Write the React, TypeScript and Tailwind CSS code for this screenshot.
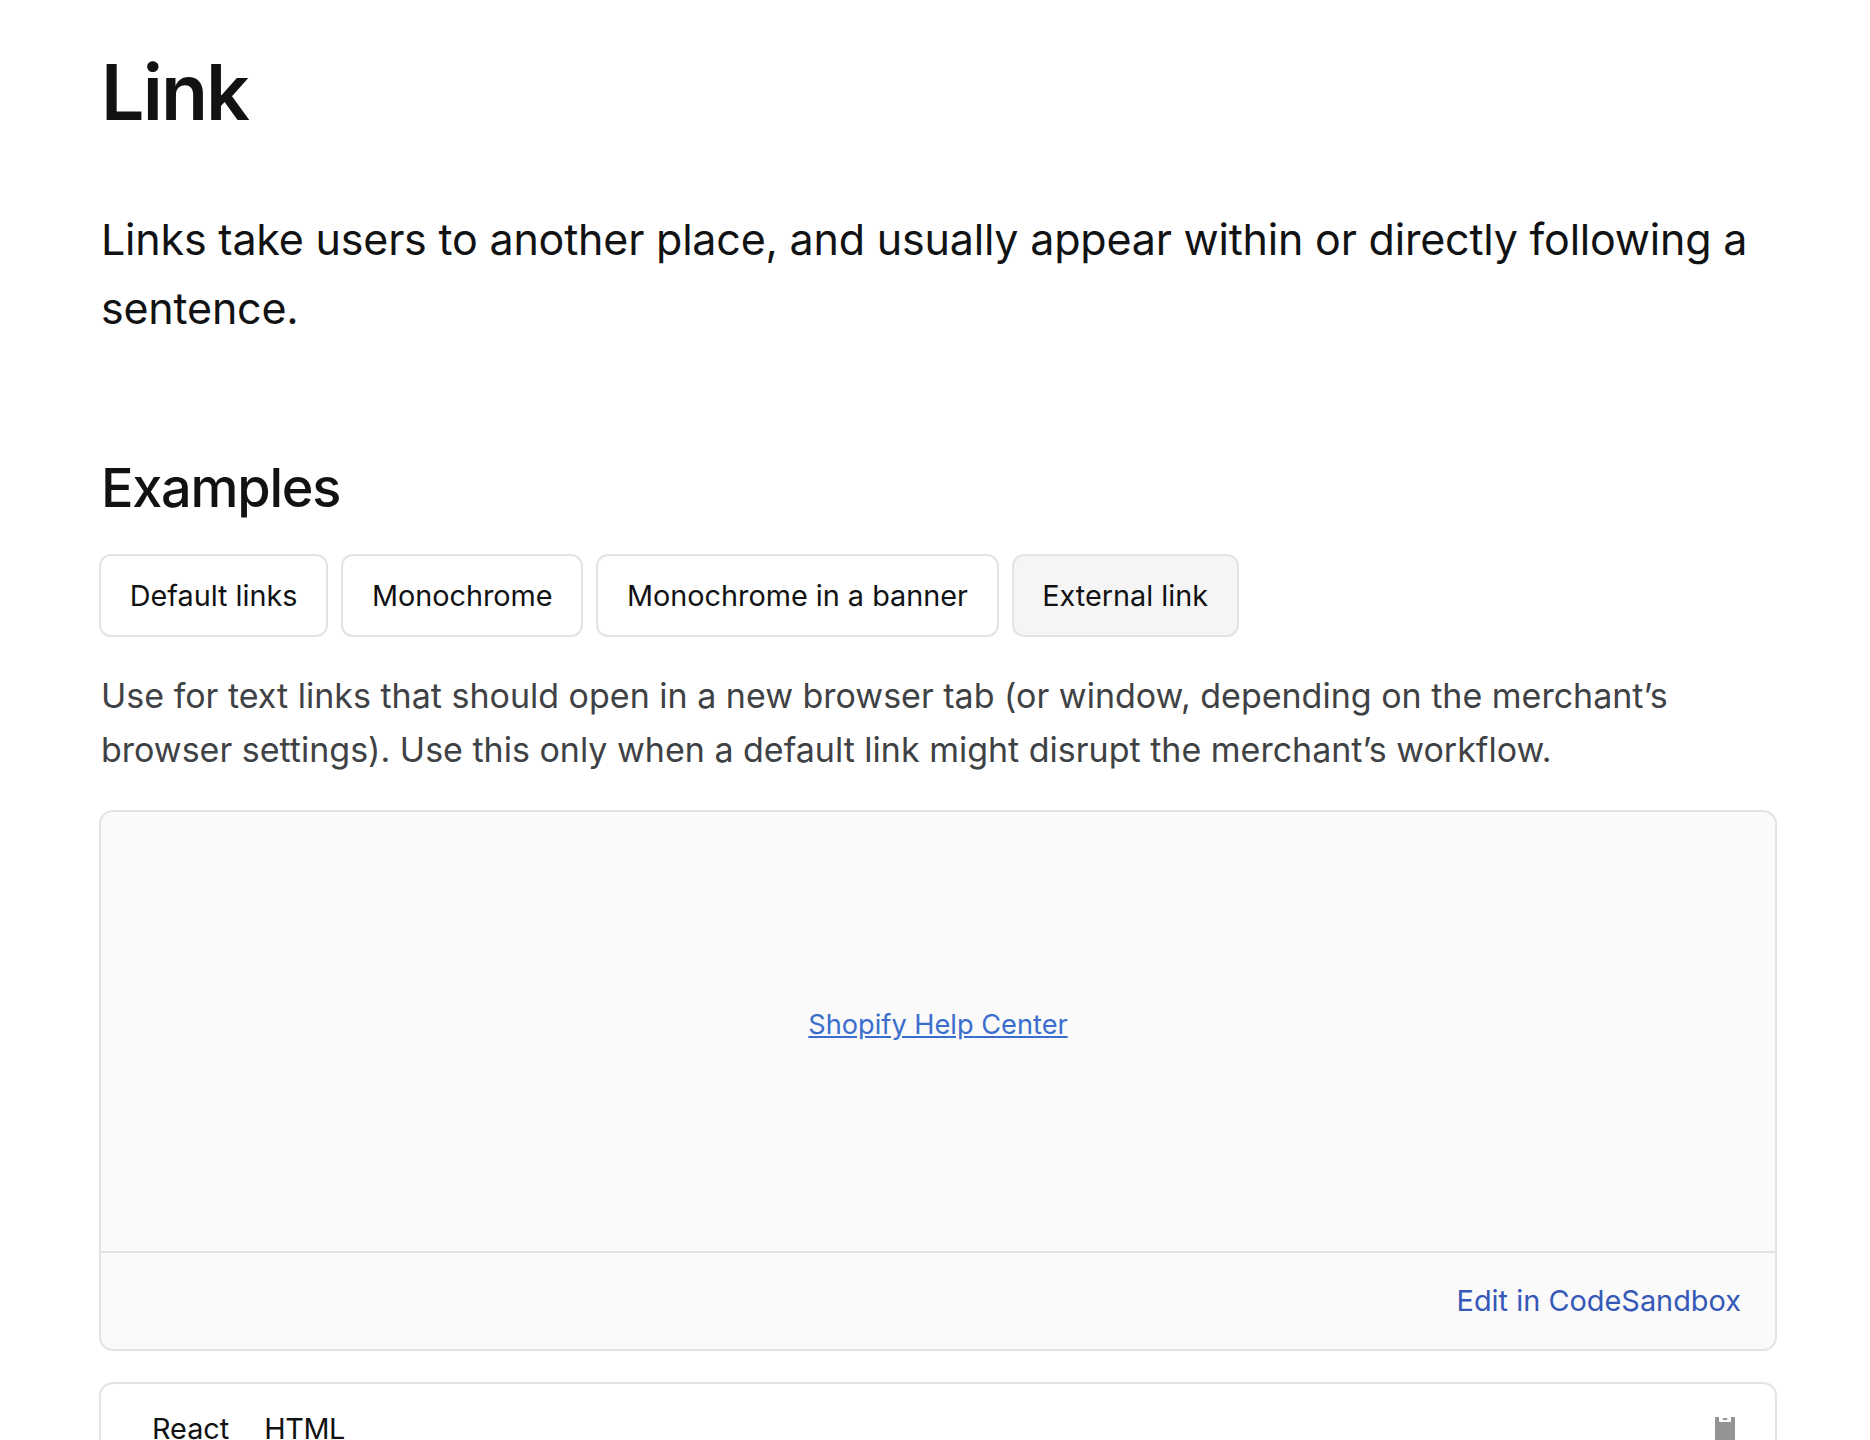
const tabs = ["Default links", "Monochrome", "Monochrome in a banner", "External link"];

export default function App() {
  return (
    <div className="h-screen overflow-hidden bg-white pl-[101px] pr-[93px] pt-[39px] font-['Inter',sans-serif] text-[#111213]">
      <h1 className="text-[77px] leading-[106px] font-semibold tracking-[-1.9px]">Link</h1>

      <p className="mt-[60px] text-[43px] leading-[69px] font-normal tracking-[-0.2px]">
        Links take users to another place, and usually appear within or directly following a sentence.
      </p>

      <h2 className="mt-[107px] text-[54px] leading-[76px] font-medium tracking-[-1.25px]">Examples</h2>

      {/* Tabs */}
      <div className="mt-[28px] -ml-[2px] flex gap-[13px]">
        {tabs.map((tab) => (
          <button
            key={tab}
            className={`h-[83px] rounded-[12px] border-2 border-[#e3e3e3] px-[28.7px] text-[28.8px] text-[#111213] ${
              tab === "External link" ? "bg-[#f5f5f5]" : "bg-white"
            }`}
          >
            {tab}
          </button>
        ))}
      </div>

      <p className="mt-[32px] text-[34px] leading-[54px] text-[#3f4245]">
        Use for text links that should open in a new browser tab (or window, depending on the merchant’s browser settings). Use this only when a default link might disrupt the merchant’s workflow.
      </p>

      {/* Preview */}
      <div className="mt-[33px] -ml-[2px] rounded-[14px] border-2 border-[#e3e3e3] bg-[#fafafa]">
        <div className="flex h-[441px] items-center justify-center border-b-2 border-[#e3e3e3] pb-[13px]">
          <a href="#" className="text-[27.2px] text-[#3b6ecc] underline">Shopify Help Center</a>
        </div>
        <div className="flex h-[96px] items-center justify-end pr-[34px]">
          <a href="#" className="text-[28.9px] text-[#3659b8]">Edit in CodeSandbox</a>
        </div>
      </div>

      {/* Code block */}
      <div className="mt-[31px] -ml-[2px] h-[200px] rounded-[14px] border-2 border-[#e3e3e3] bg-white">
        <div className="flex items-start justify-between pl-[51px] pr-[40px] pt-[23px]">
          <div className="flex gap-[35px] text-[28.8px] text-[#111213]">
            <span>React</span>
            <span className="tracking-[-0.4px]">HTML</span>
          </div>
          <svg width="20" height="24" viewBox="0 0 20 24" className="mt-[10px]" fill="#949494">
            <path d="M1 0h3v4a1 1 0 0 0 1 1h10a1 1 0 0 0 1-1V0h3a1 1 0 0 1 1 1v22a1 1 0 0 1-1 1H1a1 1 0 0 1-1-1V1a1 1 0 0 1 1-1z" />
            <rect x="7.5" y="1" width="5" height="2" rx="1" />
          </svg>
        </div>
      </div>
    </div>
  );
}
